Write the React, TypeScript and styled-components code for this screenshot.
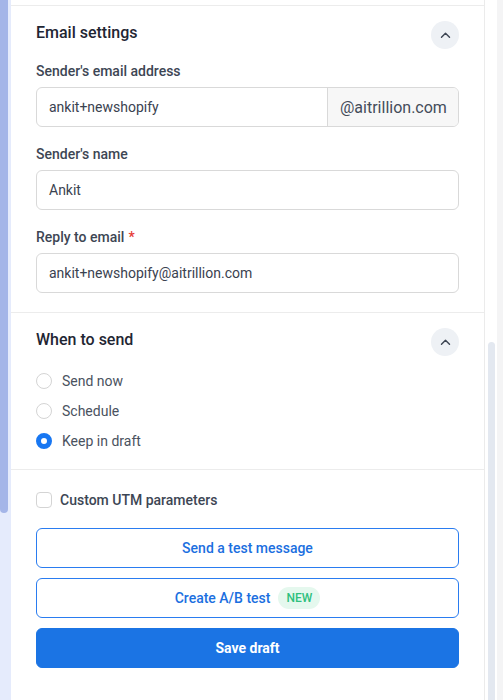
import React from "react";
import styled, { createGlobalStyle } from "styled-components";

const Global = createGlobalStyle`
  html, body { margin: 0; padding: 0; height: 100%; }
  body { font-family: Roboto, "Liberation Sans", sans-serif; background: #fff; }
  #root { height: 100%; }
  * { box-sizing: border-box; }
`;

const Page = styled.div`
  display: flex;
  height: 700px;
  overflow: hidden;
`;

const LeftTrack = styled.div`
  width: 11px;
  flex: 0 0 11px;
  background: #e5ebfc;
  display: flex;
  flex-direction: column;
`;

const LeftThumb = styled.div`
  width: 8px;
  height: 513px;
  background: #a4b5e8;
  border-radius: 0 0 4px 4px;
`;

const Panel = styled.div`
  flex: 1;
  border-right: 1px solid #ebebeb;
  display: flex;
  flex-direction: column;
`;

const TopEdge = styled.div`
  height: 6px;
  border-bottom: 1px solid #ececec;
`;

const Section = styled.section<{ $pt: number; $pb: number; $last?: boolean }>`
  padding: ${(p) => p.$pt}px 25px ${(p) => p.$pb}px 25px;
  border-bottom: ${(p) => (p.$last ? "none" : "1px solid #ececec")};
  display: flex;
  flex-direction: column;
`;

const Header = styled.div`
  display: flex;
  align-items: center;
  justify-content: space-between;
  height: 28px;
`;

const Title = styled.h2`
  margin: 0;
  font-size: 16px;
  font-weight: 500;
  color: #1f2633;
  margin-top: -5px;
`;

const Chevron = styled.button`
  width: 28px;
  height: 28px;
  border-radius: 50%;
  border: none;
  background: #eef1f5;
  display: flex;
  align-items: center;
  justify-content: center;
  padding: 0;
  margin-right: 0;
`;

const Fields = styled.div`
  display: flex;
  flex-direction: column;
  gap: 17px;
  margin-top: 12px;
`;

const Field = styled.div`
  display: flex;
  flex-direction: column;
  gap: 6px;
`;

const Label = styled.label`
  font-size: 14px;
  line-height: 20px;
  font-weight: 500;
  color: #3d4654;
`;

const Req = styled.span`
  color: #e53935;
  margin-left: 4px;
`;

const InputBox = styled.div`
  height: 40px;
  border: 1px solid #d9d9d9;
  border-radius: 6px;
  display: flex;
  overflow: hidden;
  background: #fff;
`;

const InputText = styled.div`
  flex: 1;
  display: flex;
  align-items: center;
  padding-left: 12px;
  font-size: 14px;
  color: #3a4250;
`;

const Addon = styled.div`
  width: 131px;
  border-left: 1px solid #d9d9d9;
  background: #f7f7f7;
  display: flex;
  align-items: center;
  padding-left: 12px;
  font-size: 16px;
  color: #444c5a;
`;

const Radios = styled.div`
  display: flex;
  flex-direction: column;
  gap: 10px;
  margin-top: 15px;
`;

const RadioRow = styled.div`
  display: flex;
  align-items: center;
  height: 20px;
  gap: 10px;
  font-size: 14px;
  color: #4a5260;
`;

const RadioDot = styled.span<{ $on?: boolean }>`
  width: 16px;
  height: 16px;
  border-radius: 50%;
  box-sizing: border-box;
  border: ${(p) => (p.$on ? "5px solid #1877f2" : "1px solid #d4d4d4")};
  background: #fff;
  flex: 0 0 16px;
`;

const CheckRow = styled.div`
  display: flex;
  align-items: center;
  gap: 8px;
  height: 20px;
  font-size: 14px;
  font-weight: 500;
  color: #3d4654;
`;

const CheckBox = styled.span`
  width: 16px;
  height: 16px;
  border: 1px solid #d4d4d4;
  border-radius: 4px;
  background: #fff;
`;

const Buttons = styled.div`
  display: flex;
  flex-direction: column;
  gap: 10px;
  margin-top: 18px;
`;

const Button = styled.button<{ $primary?: boolean }>`
  height: 40px;
  border-radius: 6px;
  font-family: inherit;
  font-size: 14px;
  font-weight: ${(p) => (p.$primary ? 700 : 500)};
  color: ${(p) => (p.$primary ? "#fff" : "#1b6fe0")};
  background: ${(p) => (p.$primary ? "#1b74e4" : "#fff")};
  border: 1px solid ${(p) => (p.$primary ? "#1b74e4" : "#2a7cf0")};
  display: flex;
  align-items: center;
  justify-content: center;
  gap: 8px;
  padding: 0;
`;

const Badge = styled.span`
  background: #e5f8ee;
  color: #2fc07e;
  font-size: 12px;
  font-weight: 500;
  border-radius: 11px;
  height: 22px;
  padding: 0 8px;
  display: inline-flex;
  align-items: center;
`;

const RightGutter = styled.div`
  width: 12px;
  flex: 0 0 12px;
  display: flex;
  flex-direction: column;
  padding-left: 3px;
`;

const RightThumb = styled.div`
  margin-top: 342px;
  width: 7px;
  flex: 1;
  background: #e3e8f0;
  border-radius: 4px 4px 0 0;
`;

const EdgeStrip = styled.div`
  width: 6px;
  flex: 0 0 6px;
  background: #f4f4f5;
`;

const ChevronUp = () => (
  <svg width="13" height="13" viewBox="0 0 12 12" fill="none">
    <path d="M2.3 7.6 L6 3.9 L9.7 7.6" stroke="#3c4452" strokeWidth="1.3" strokeLinecap="round" strokeLinejoin="round" />
  </svg>
);

export default function App() {
  return (
    <>
      <Global />
      <Page>
        <LeftTrack>
          <LeftThumb />
        </LeftTrack>
        <Panel>
          <TopEdge />
          <Section $pt={15} $pb={19}>
            <Header>
              <Title>Email settings</Title>
              <Chevron aria-label="collapse">
                <ChevronUp />
              </Chevron>
            </Header>
            <Fields>
              <Field>
                <Label>Sender's email address</Label>
                <InputBox>
                  <InputText>ankit+newshopify</InputText>
                  <Addon>@aitrillion.com</Addon>
                </InputBox>
              </Field>
              <Field>
                <Label>Sender's name</Label>
                <InputBox>
                  <InputText>Ankit</InputText>
                </InputBox>
              </Field>
              <Field>
                <Label>
                  Reply to email<Req>*</Req>
                </Label>
                <InputBox>
                  <InputText>ankit+newshopify@aitrillion.com</InputText>
                </InputBox>
              </Field>
            </Fields>
          </Section>
          <Section $pt={15} $pb={18}>
            <Header>
              <Title>When to send</Title>
              <Chevron aria-label="collapse">
                <ChevronUp />
              </Chevron>
            </Header>
            <Radios>
              <RadioRow>
                <RadioDot />
                Send now
              </RadioRow>
              <RadioRow>
                <RadioDot />
                Schedule
              </RadioRow>
              <RadioRow>
                <RadioDot $on />
                Keep in draft
              </RadioRow>
            </Radios>
          </Section>
          <Section $pt={20} $pb={20} $last>
            <CheckRow>
              <CheckBox />
              Custom UTM parameters
            </CheckRow>
            <Buttons>
              <Button>Send a test message</Button>
              <Button>
                Create A/B test <Badge>NEW</Badge>
              </Button>
              <Button $primary>Save draft</Button>
            </Buttons>
          </Section>
        </Panel>
        <RightGutter>
          <RightThumb />
        </RightGutter>
        <EdgeStrip />
      </Page>
    </>
  );
}
